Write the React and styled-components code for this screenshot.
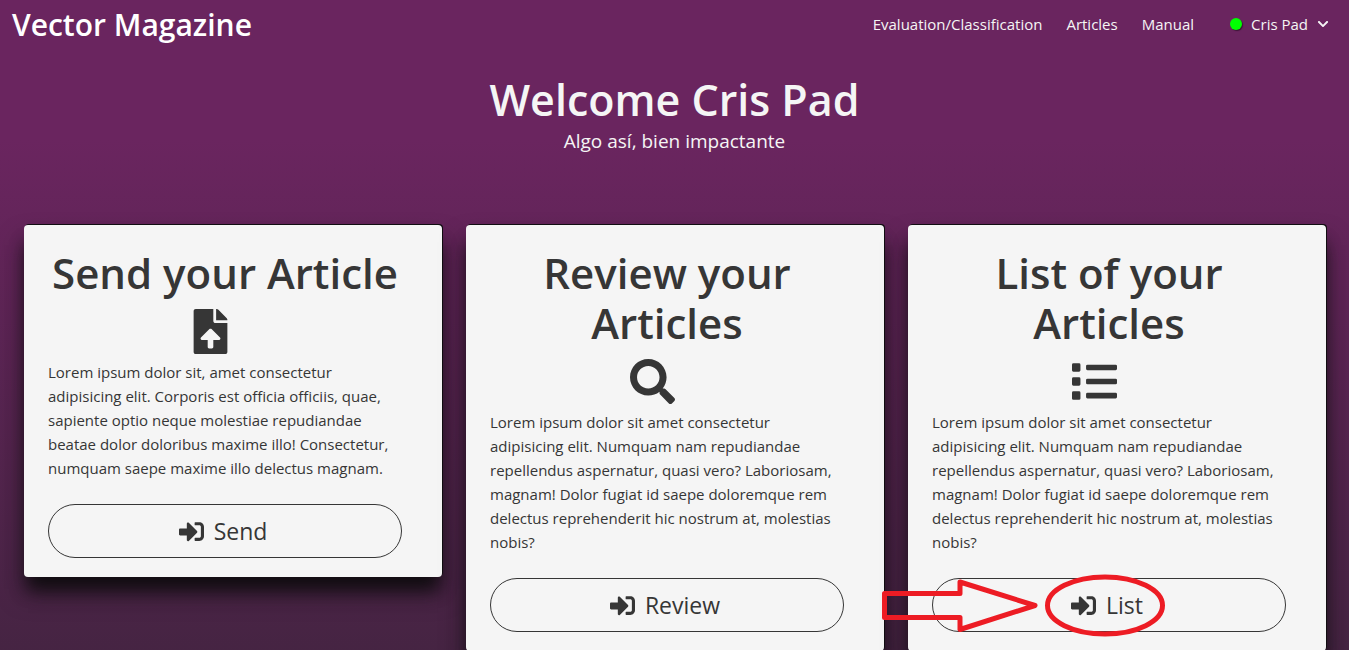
import React from "react";
import styled, { createGlobalStyle } from "styled-components";
import { FaFileUpload, FaSearch, FaList, FaSignInAlt, FaChevronDown } from "react-icons/fa";

const GlobalStyle = createGlobalStyle`
  *, *::before, *::after { box-sizing: border-box; }
  html { background: #422440; }
  body {
    margin: 0;
    font-family: "Open Sans", "Noto Sans", sans-serif;
    font-size: 15px;
    line-height: 24px;
    color: #f5f5f5;
  }
  h1, h2, p { margin: 0; }
`;

const Page = styled.div`
  min-height: 100vh;
  background: linear-gradient(180deg, #6a255f 0, #6a255f 140px, #422440 700px);
`;

const Header = styled.header`
  display: flex;
  align-items: center;
  justify-content: space-between;
  height: 48px;
  padding: 0 20px 0 12px;
`;

const Brand = styled.a`
  padding-top: 2px;
  font-size: 30px;
  font-weight: 600;
  line-height: 48px;
  color: #fff;
  text-decoration: none;
`;

const Nav = styled.nav`
  display: flex;
  align-items: center;
  gap: 24px;
`;

const NavLink = styled.a`
  color: inherit;
  text-decoration: none;
`;

const UserButton = styled.button`
  display: flex;
  align-items: center;
  gap: 9px;
  margin-left: 12px;
  padding: 0;
  border: 0;
  background: none;
  color: inherit;
  font: inherit;
  cursor: pointer;
`;

const StatusDot = styled.span`
  width: 12px;
  height: 12px;
  border-radius: 50%;
  background: #00ff00;
  box-shadow: 1px 1px 1px #3a1435;
`;

const Hero = styled.section`
  padding: 24px 24px 0;
  text-align: center;
`;

const HeroTitle = styled.h1`
  font-size: 43px;
  font-weight: 600;
  line-height: 55px;
`;

const HeroText = styled.p`
  font-size: 19px;
  line-height: 28px;
`;

const Cards = styled.main`
  display: grid;
  grid-template-columns: repeat(3, 1fr);
  align-items: start;
  gap: 24px;
  padding: 70px 23px 24px 24px;
`;

const Card = styled.article`
  padding: 23px 40px 19px 24px;
  border-radius: 4px;
  background: #f5f5f5;
  color: #363636;
  box-shadow: 1px -1px 0 #110d11, 0 16px 16px -4px #110d11, 0 16px 24px rgba(17, 13, 17, 0.5);
`;

const CardTitle = styled.h2`
  font-size: 42px;
  font-weight: 600;
  line-height: 50px;
  text-align: center;
`;

const CardIcon = styled.div`
  display: flex;
  justify-content: center;
  padding: 11px 30px 6px 0;
  font-size: 45px;
`;

const CardText = styled.p`
  margin-bottom: 24px;
`;

const Action = styled.div`
  position: relative;
`;

const ActionButton = styled.button`
  display: flex;
  align-items: center;
  justify-content: center;
  gap: 10px;
  width: 100%;
  height: 54px;
  padding: 0 4px 0 0;
  border: 1px solid #363636;
  border-radius: 27px;
  background: transparent;
  color: inherit;
  font: inherit;
  font-size: 23px;
  cursor: pointer;
`;

const Pointer = styled.svg`
  position: absolute;
  top: -6px;
  left: -52px;
  pointer-events: none;
`;

const cards = [
  {
    title: "Send your Article",
    Icon: FaFileUpload,
    action: "Send",
    text: "Lorem ipsum dolor sit, amet consectetur adipisicing elit. Corporis est officia officiis, quae, sapiente optio neque molestiae repudiandae beatae dolor doloribus maxime illo! Consectetur, numquam saepe maxime illo delectus magnam.",
  },
  {
    title: "Review your Articles",
    Icon: FaSearch,
    action: "Review",
    text: "Lorem ipsum dolor sit amet consectetur adipisicing elit. Numquam nam repudiandae repellendus aspernatur, quasi vero? Laboriosam, magnam! Dolor fugiat id saepe doloremque rem delectus reprehenderit hic nostrum at, molestias nobis?",
  },
  {
    title: "List of your Articles",
    Icon: FaList,
    action: "List",
    highlighted: true,
    text: "Lorem ipsum dolor sit amet consectetur adipisicing elit. Numquam nam repudiandae repellendus aspernatur, quasi vero? Laboriosam, magnam! Dolor fugiat id saepe doloremque rem delectus reprehenderit hic nostrum at, molestias nobis?",
  },
];

function Highlight() {
  return (
    <Pointer width="290" height="66" viewBox="0 0 290 66" fill="none" stroke="#ed1c24" strokeWidth="5" aria-hidden="true">
      <path d="M4.500 21.500H80V10L155 33.500L80 57.500V45.500H4.500Z" strokeLinejoin="round" />
      <ellipse cx="225" cy="33.500" rx="57.500" ry="28.500" />
    </Pointer>
  );
}

export default function App() {
  return (
    <Page>
      <GlobalStyle />
      <Header>
        <Brand href="#">Vector Magazine</Brand>
        <Nav>
          <NavLink href="#evaluation">Evaluation/Classification</NavLink>
          <NavLink href="#articles">Articles</NavLink>
          <NavLink href="#manual">Manual</NavLink>
          <UserButton type="button" aria-haspopup="menu">
            <StatusDot />
            Cris Pad
            <FaChevronDown size={12} />
          </UserButton>
        </Nav>
      </Header>
      <Hero>
        <HeroTitle>Welcome Cris Pad</HeroTitle>
        <HeroText>Algo así, bien impactante</HeroText>
      </Hero>
      <Cards>
        {cards.map(({ title, Icon, action, text, highlighted }) => (
          <Card key={title}>
            <CardTitle>{title}</CardTitle>
            <CardIcon>
              <Icon aria-hidden="true" />
            </CardIcon>
            <CardText>{text}</CardText>
            <Action>
              <ActionButton type="button">
                <FaSignInAlt size={25} aria-hidden="true" />
                {action}
              </ActionButton>
              {highlighted && <Highlight />}
            </Action>
          </Card>
        ))}
      </Cards>
    </Page>
  );
}
